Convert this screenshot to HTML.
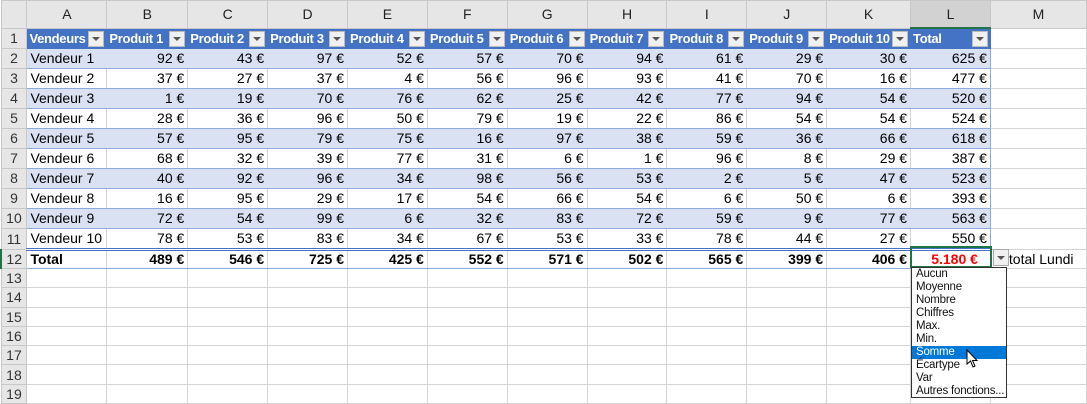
<!DOCTYPE html>
<html><head><meta charset="utf-8"><style>
body{margin:0;width:1087px;height:402px;overflow:hidden;background:#fff;font-family:"Liberation Sans",sans-serif;}
table{border-collapse:collapse;table-layout:fixed;position:absolute;left:0;top:0;}
td{height:19px;padding:0 3px;border:1px solid #d4d4d4;font-size:14px;white-space:nowrap;overflow:hidden;text-align:right;line-height:19px;}
tr.h td{height:26px;background:#e6e6e6;text-align:center;color:#222;border-color:#c8c8c8;font-size:14px;}
tr.h td.sel{background:#d2d2d2;border-bottom:2px solid #217346;}
td.rn{background:#e6e6e6;text-align:center;color:#333;border-color:#c8c8c8;padding:0;}
td.a{text-align:left;}
tr.t1 td.c{background:#4472C4;color:#fff;font-weight:bold;text-align:left;position:relative;border-color:#4472C4;font-size:13px;letter-spacing:-0.3px;padding-left:2px;}
tr.b td.c{background:#D9E1F2;border-left-color:#D9E1F2;border-right-color:#D9E1F2;border-top:1px solid #8EA9DB;border-bottom:1px solid #8EA9DB;}
tr.w td.c{border-top:1px solid #8EA9DB;border-bottom:1px solid #8EA9DB;}
tr.tot td{height:17px;line-height:17px;}
tr.tot td.c{font-weight:bold;border-top:3px double #4472C4;border-bottom:1px solid #8EA9DB;}
tr.lo td{height:18.3px;line-height:18px;}
td.c.last{border-right:1px solid #8EA9DB !important;}
.fb{position:absolute;right:2px;top:2px;width:14px;height:14px;background:#f0f0f0;border:1px solid #bbb;}
.fb:after{content:"";position:absolute;left:3px;top:5px;border-left:4px solid transparent;border-right:4px solid transparent;border-top:4px solid #555;}
.dd{position:absolute;left:911px;top:267px;width:94px;height:129px;border:1px solid #333;background:#fff;font-size:11.5px;overflow:hidden;}
.dd div{height:13px;line-height:13px;padding-left:4px;color:#111;white-space:nowrap;letter-spacing:-0.2px;}
.dd div.s{background:#0078D7;color:#fff;}
.ab{position:absolute;left:993px;top:249px;width:14px;height:15px;background:#f0f0f0;border:1px solid #aaa;}
.ab:after{content:"";position:absolute;left:3px;top:6px;border-left:4px solid transparent;border-right:4px solid transparent;border-top:4px solid #555;}
.cellsel{position:absolute;left:910px;top:246px;width:78px;height:18px;border:2px solid #217346;}
</style></head><body>
<table>
<colgroup><col style="width:26px"><col style="width:80px"><col style="width:81px"><col style="width:80px"><col style="width:80px"><col style="width:80px"><col style="width:80px"><col style="width:80px"><col style="width:80px"><col style="width:80px"><col style="width:80px"><col style="width:84px"><col style="width:80px"><col style="width:96px"></colgroup>
<tr class="h"><td></td><td>A</td><td>B</td><td>C</td><td>D</td><td>E</td><td>F</td><td>G</td><td>H</td><td>I</td><td>J</td><td>K</td><td class="sel">L</td><td>M</td></tr>
<tr class="t1"><td class="rn">1</td><td class="c">Vendeurs<span class="fb"></span></td><td class="c">Produit 1<span class="fb"></span></td><td class="c">Produit 2<span class="fb"></span></td><td class="c">Produit 3<span class="fb"></span></td><td class="c">Produit 4<span class="fb"></span></td><td class="c">Produit 5<span class="fb"></span></td><td class="c">Produit 6<span class="fb"></span></td><td class="c">Produit 7<span class="fb"></span></td><td class="c">Produit 8<span class="fb"></span></td><td class="c">Produit 9<span class="fb"></span></td><td class="c">Produit 10<span class="fb"></span></td><td class="c">Total<span class="fb"></span></td><td></td></tr>
<tr class="b"><td class="rn">2</td><td class="c a">Vendeur 1</td><td class="c">92 €</td><td class="c">43 €</td><td class="c">97 €</td><td class="c">52 €</td><td class="c">57 €</td><td class="c">70 €</td><td class="c">94 €</td><td class="c">61 €</td><td class="c">29 €</td><td class="c">30 €</td><td class="c last">625 €</td><td></td></tr>
<tr class="w"><td class="rn">3</td><td class="c a">Vendeur 2</td><td class="c">37 €</td><td class="c">27 €</td><td class="c">37 €</td><td class="c">4 €</td><td class="c">56 €</td><td class="c">96 €</td><td class="c">93 €</td><td class="c">41 €</td><td class="c">70 €</td><td class="c">16 €</td><td class="c last">477 €</td><td></td></tr>
<tr class="b"><td class="rn">4</td><td class="c a">Vendeur 3</td><td class="c">1 €</td><td class="c">19 €</td><td class="c">70 €</td><td class="c">76 €</td><td class="c">62 €</td><td class="c">25 €</td><td class="c">42 €</td><td class="c">77 €</td><td class="c">94 €</td><td class="c">54 €</td><td class="c last">520 €</td><td></td></tr>
<tr class="w"><td class="rn">5</td><td class="c a">Vendeur 4</td><td class="c">28 €</td><td class="c">36 €</td><td class="c">96 €</td><td class="c">50 €</td><td class="c">79 €</td><td class="c">19 €</td><td class="c">22 €</td><td class="c">86 €</td><td class="c">54 €</td><td class="c">54 €</td><td class="c last">524 €</td><td></td></tr>
<tr class="b"><td class="rn">6</td><td class="c a">Vendeur 5</td><td class="c">57 €</td><td class="c">95 €</td><td class="c">79 €</td><td class="c">75 €</td><td class="c">16 €</td><td class="c">97 €</td><td class="c">38 €</td><td class="c">59 €</td><td class="c">36 €</td><td class="c">66 €</td><td class="c last">618 €</td><td></td></tr>
<tr class="w"><td class="rn">7</td><td class="c a">Vendeur 6</td><td class="c">68 €</td><td class="c">32 €</td><td class="c">39 €</td><td class="c">77 €</td><td class="c">31 €</td><td class="c">6 €</td><td class="c">1 €</td><td class="c">96 €</td><td class="c">8 €</td><td class="c">29 €</td><td class="c last">387 €</td><td></td></tr>
<tr class="b"><td class="rn">8</td><td class="c a">Vendeur 7</td><td class="c">40 €</td><td class="c">92 €</td><td class="c">96 €</td><td class="c">34 €</td><td class="c">98 €</td><td class="c">56 €</td><td class="c">53 €</td><td class="c">2 €</td><td class="c">5 €</td><td class="c">47 €</td><td class="c last">523 €</td><td></td></tr>
<tr class="w"><td class="rn">9</td><td class="c a">Vendeur 8</td><td class="c">16 €</td><td class="c">95 €</td><td class="c">29 €</td><td class="c">17 €</td><td class="c">54 €</td><td class="c">66 €</td><td class="c">54 €</td><td class="c">6 €</td><td class="c">50 €</td><td class="c">6 €</td><td class="c last">393 €</td><td></td></tr>
<tr class="b"><td class="rn">10</td><td class="c a">Vendeur 9</td><td class="c">72 €</td><td class="c">54 €</td><td class="c">99 €</td><td class="c">6 €</td><td class="c">32 €</td><td class="c">83 €</td><td class="c">72 €</td><td class="c">59 €</td><td class="c">9 €</td><td class="c">77 €</td><td class="c last">563 €</td><td></td></tr>
<tr class="w"><td class="rn">11</td><td class="c a">Vendeur 10</td><td class="c">78 €</td><td class="c">53 €</td><td class="c">83 €</td><td class="c">34 €</td><td class="c">67 €</td><td class="c">53 €</td><td class="c">33 €</td><td class="c">78 €</td><td class="c">44 €</td><td class="c">27 €</td><td class="c last">550 €</td><td></td></tr>
<tr class="tot"><td class="rn" style="border-left:2px solid #217346">12</td><td class="c a">Total</td><td class="c">489 €</td><td class="c">546 €</td><td class="c">725 €</td><td class="c">425 €</td><td class="c">552 €</td><td class="c">571 €</td><td class="c">502 €</td><td class="c">565 €</td><td class="c">399 €</td><td class="c">406 €</td><td class="c last" style="color:#f00;padding-right:12px">5.180 €</td><td class="a" style="padding-left:18px">total Lundi</td></tr>
<tr class="lo"><td class="rn">13</td><td></td><td></td><td></td><td></td><td></td><td></td><td></td><td></td><td></td><td></td><td></td><td></td><td></td></tr>
<tr class="lo"><td class="rn">14</td><td></td><td></td><td></td><td></td><td></td><td></td><td></td><td></td><td></td><td></td><td></td><td></td><td></td></tr>
<tr class="lo"><td class="rn">15</td><td></td><td></td><td></td><td></td><td></td><td></td><td></td><td></td><td></td><td></td><td></td><td></td><td></td></tr>
<tr class="lo"><td class="rn">16</td><td></td><td></td><td></td><td></td><td></td><td></td><td></td><td></td><td></td><td></td><td></td><td></td><td></td></tr>
<tr class="lo"><td class="rn">17</td><td></td><td></td><td></td><td></td><td></td><td></td><td></td><td></td><td></td><td></td><td></td><td></td><td></td></tr>
<tr class="lo"><td class="rn">18</td><td></td><td></td><td></td><td></td><td></td><td></td><td></td><td></td><td></td><td></td><td></td><td></td><td></td></tr>
<tr class="lo"><td class="rn">19</td><td></td><td></td><td></td><td></td><td></td><td></td><td></td><td></td><td></td><td></td><td></td><td></td><td></td></tr>
</table>
<div class="cellsel"></div>
<div class="ab"></div>
<div class="dd"><div>Aucun</div><div>Moyenne</div><div>Nombre</div><div>Chiffres</div><div>Max.</div><div>Min.</div><div class="s">Somme</div><div>Écartype</div><div>Var</div><div>Autres fonctions...</div></div>
<svg style="position:absolute;left:966px;top:349px" width="14" height="20" viewBox="0 0 14 20"><path d="M1 1 L1 15 L4.5 12 L7 18 L9 17 L6.5 11.5 L11 11.5 Z" fill="#fff" stroke="#000" stroke-width="1"/></svg>
</body></html>
